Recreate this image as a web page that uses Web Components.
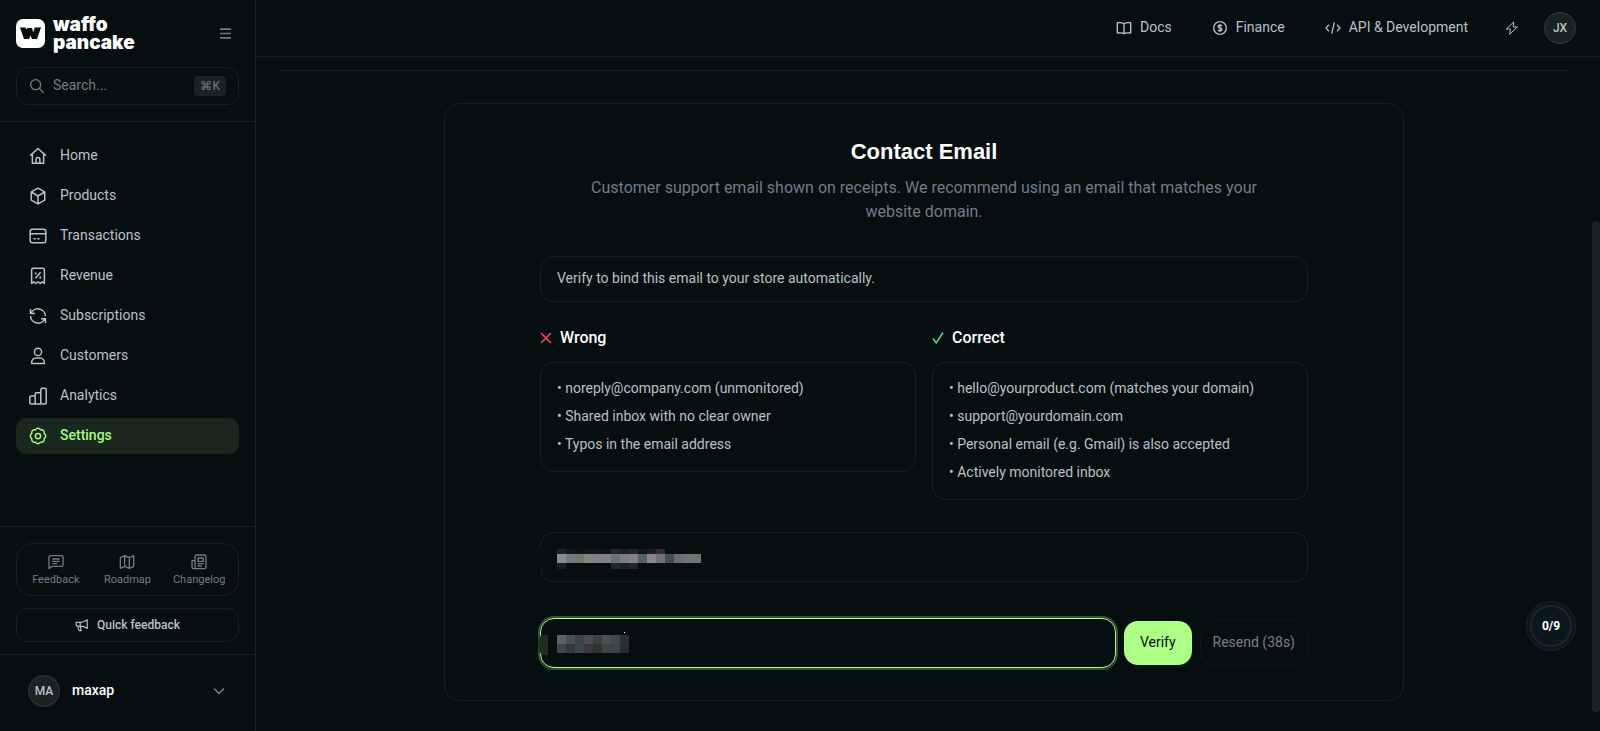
<!DOCTYPE html>
<html lang="en">
<head>
<meta charset="utf-8">
<title>Settings - Waffo Pancake</title>
<style>
    :root {
        --bg: #060e10;
        --line: #181f21;
        --text: #b9c1c9;
        --muted: #6e7e88;
        --raised: #1b2223;
        --accent: #adff85;
    }

    body {
        margin: 0;
        background: var(--bg);
        color: var(--text);
        font-family: Roboto, "Liberation Sans", sans-serif;
        font-size: 14px;
        line-height: 20px;
    }
</style>
</head>
<body>
<app-shell>
    <side-bar slot="sidebar">
        <nav-item icon="home">Home</nav-item>
        <nav-item icon="box">Products</nav-item>
        <nav-item icon="card">Transactions</nav-item>
        <nav-item icon="receipt">Revenue</nav-item>
        <nav-item icon="sync">Subscriptions</nav-item>
        <nav-item icon="user">Customers</nav-item>
        <nav-item icon="chart">Analytics</nav-item>
        <nav-item icon="gear" active>Settings</nav-item>
    </side-bar>
    <top-bar slot="header">
        <top-link icon="book">Docs</top-link>
        <top-link icon="dollar">Finance</top-link>
        <top-link icon="code">API &amp; Development</top-link>
    </top-bar>
    <contact-card>
        <tip-list icon="cross" label="Wrong">
            <li>noreply@company.com (unmonitored)</li>
            <li>Shared inbox with no clear owner</li>
            <li>Typos in the email address</li>
        </tip-list>
        <tip-list icon="check" label="Correct">
            <li>hello@yourproduct.com (matches your domain)</li>
            <li>support@yourdomain.com</li>
            <li>Personal email (e.g. Gmail) is also accepted</li>
            <li>Actively monitored inbox</li>
        </tip-list>
    </contact-card>
</app-shell>
<progress-badge>0/9</progress-badge>

<script>
const ICONS = {
    home: '<path d="M1.500 11.500 12 2l10.500 9.500M4.500 9.500v12h15v-12M9.500 21.500v-5a2.500 2.500 0 0 1 5 0v5"/>',
    box: '<path d="M12 1.500 21 6.500v11l-9 5-9-5v-11zM3 6.500l9 5.500 9-5.500M12 12v10.500"/>',
    card: '<rect x="1.500" y="3" width="21" height="18" rx="3"/><path d="M1.500 9h21M6 15.500h3M11 15.500h3"/>',
    receipt: '<path d="M3.500 22V4a2.500 2.500 0 0 1 2.500-2.500h12A2.500 2.500 0 0 1 20.500 4v18l-2.800-2.300L15 22l-3-2.300L9 22l-2.700-2.300zM8.500 15l7-8"/><path d="M7.800 8.500h2.400M13.800 14h2.400" stroke-width="2.500"/>',
    sync: '<path d="M2 2.500v6h6M22 21.500v-6h-6M2.800 8.500A10 10 0 0 1 22 12M21.200 15.500A10 10 0 0 1 2 12"/>',
    user: '<circle cx="12" cy="6.500" r="4.800"/><path d="M3.500 22v-1.500a6 6 0 0 1 6-6h5a6 6 0 0 1 6 6V22z"/>',
    chart: '<rect x="1" y="12" width="7.300" height="10.500" rx="2"/><path d="M8.300 12V9.500a2 2 0 0 1 2-2h5.400M8 22.500h8"/><rect x="15.700" y="1.500" width="7.300" height="21" rx="2"/>',
    gear: '<path d="M20.300 8.600a4 4 0 0 1 0 6.800 4 4 0 0 1-4.900 4.900 4 4 0 0 1-6.800 0 4 4 0 0 1-4.900-4.900 4 4 0 0 1 0-6.800 4 4 0 0 1 4.900-4.900 4 4 0 0 1 6.800 0 4 4 0 0 1 4.900 4.900z"/><circle cx="12" cy="12" r="3.500"/>',
    book: '<path d="M12 5.500v14M12 5.500C10 4 7 3.500 2 4v15.500c5-.5 8-.5 10 1 2-1.500 5-1.500 10-1V4C17 3.500 14 4 12 5.500z"/>',
    dollar: '<circle cx="12" cy="12" r="9.500"/><path d="M15 9.500c-.5-1.200-1.500-1.700-3-1.700s-3 .5-3 1.900 1.500 1.900 3 2.200 3 .8 3 2.200-1.500 2.100-3 2.100-2.600-.6-3-1.700M12 6v12"/>',
    code: '<path d="M6 7 1.500 12 6 17M18 7l4.500 5-4.500 5M14 3.500l-4 17"/>',
    bolt: '<path d="M14.500 3 3.500 13.500h6L8.500 21.500l11.500-11h-6z"/>',
    search: '<circle cx="10" cy="10" r="7.500"/><path d="m15.500 15.500 6.500 6.500"/>',
    menu: '<path d="M2 4h20M2 12h20M2 20h20"/>',
    message: '<path d="M1.500 22V5a2.500 2.500 0 0 1 2.500-2.500h16A2.500 2.500 0 0 1 22.500 5v11a2.500 2.500 0 0 1-2.500 2.500H6zM6.500 7.500h11M6.500 11h11M6.500 14.500h7"/>',
    map: '<path d="M2 5.500 8.500 2.500l7 3 6.500-3v16l-6.500 3-7-3L2 21.500zM8.500 2.500v16M15.500 5.500v16"/>',
    news: '<path d="M6 19.500V4a2.500 2.500 0 0 1 2.500-2.500h11.500A2.500 2.500 0 0 1 22.500 4v15.500a2.500 2.500 0 0 1-2.500 2.500H4A2.500 2.500 0 0 1 1.500 19.500V10H6M4.500 22A2 2 0 0 0 6 19.500M10.500 6h8v5h-8zM10 14.500h9M10 18h6"/>',
    horn: '<path d="M2 7.500h7c4 0 8-1.500 12-4.500v15c-4-3-8-4-12-4H4a2 2 0 0 1-2-2zM5 14c0 3 .5 5.500 2.500 7.500H11c-1.500-2-2-4.500-2-7.500V7.500"/>',
    chevron: '<path d="m2 7 10 10L22 7"/>',
    cross: '<path d="m2 2 20 20M22 2 2 22"/>',
    check: '<path d="m2 13 6.500 9L22 1"/>'
};

// Line icon; size follows --icon-size, weight follows the stroke attribute.
class UiIcon extends HTMLElement {
    connectedCallback() {
        if (!this.shadowRoot) this.attachShadow({ mode: 'open' });
        const width = this.getAttribute('stroke') || '1.5';
        this.shadowRoot.innerHTML = `
            <style>
                :host { display: block; flex: none; width: var(--icon-size, 16px); height: var(--icon-size, 16px); }
                svg { display: block; width: 100%; height: 100%; }
            </style>
            <svg viewBox="0 0 24 24" fill="none" stroke="currentColor" stroke-width="${width}"
                stroke-linejoin="round" aria-hidden="true">${ICONS[this.getAttribute('name')]}</svg>
        `;
    }
}

class AppShell extends HTMLElement {
    constructor() {
        super();
        this.attachShadow({ mode: 'open' }).innerHTML = `
            <style>
                :host { display: grid; grid-template-columns: 256px 1fr; height: 100vh; overflow: hidden; }
                .main { display: flex; flex-direction: column; min-width: 0; min-height: 0; }
                .body { display: flex; flex: 1; min-height: 0; }
                main { flex: 1; padding: 13px 24px 0; overflow: hidden; }
                hr { margin: 0 0 32px; border: 0; border-top: 1px solid var(--line); }
                .track { width: 8px; display: grid; grid-template-rows: 164fr 491fr 19fr; }
                .thumb { grid-row: 2; border-radius: 4px; background: var(--raised); }
            </style>
            <slot name="sidebar"></slot>
            <div class="main">
                <slot name="header"></slot>
                <div class="body">
                    <main><hr><slot></slot></main>
                    <div class="track"><div class="thumb"></div></div>
                </div>
            </div>
        `;
    }
}

class NavItem extends HTMLElement {
    connectedCallback() {
        if (!this.shadowRoot) this.attachShadow({ mode: 'open' });
        this.shadowRoot.innerHTML = `
            <style>
                :host { display: block; --icon-size: 18px; }
                a {
                    display: flex;
                    align-items: center;
                    gap: 13px;
                    height: 36px;
                    padding: 0 13px;
                    border-radius: 10px;
                    color: var(--text);
                    text-decoration: none;
                }
                span { padding-bottom: 2px; }
                :host([active]) a { background: #1a271f; color: #a3fb7c; font-weight: 500; }
            </style>
            <a href="#"><ui-icon name="${this.getAttribute('icon')}" stroke="2"></ui-icon><span><slot></slot></span></a>
        `;
    }
}

class SideBar extends HTMLElement {
    constructor() {
        super();
        this.attachShadow({ mode: 'open' }).innerHTML = `
            <style>
                :host { display: flex; flex-direction: column; border-right: 1px solid var(--line); box-sizing: border-box; }
                button { font: inherit; color: inherit; background: none; border: 0; padding: 0; }
                .top { padding: 16px; border-bottom: 1px solid var(--line); }
                .brand { display: flex; align-items: center; gap: 8px; height: 35px; margin-bottom: 16px; }
                .brand svg { width: 29px; height: 29px; }
                .name { flex: 1; color: #fff; font: 900 19px/18px Inter, sans-serif; }
                .menu { --icon-size: 13px; margin-right: 7px; color: var(--muted); }
                .search {
                    display: flex;
                    align-items: center;
                    gap: 8px;
                    height: 36px;
                    padding: 0 12px;
                    border: 1px solid var(--line);
                    border-radius: 12px;
                    color: var(--muted);
                }
                input {
                    flex: 1;
                    min-width: 0;
                    padding: 0 0 2px;
                    border: 0;
                    outline: 0;
                    background: none;
                    color: var(--text);
                    font: inherit;
                }
                input::placeholder { color: var(--muted); opacity: 1; }
                kbd { padding: 0 6px; border-radius: 4px; background: var(--raised); font: inherit; font-size: 12px; }
                nav { display: flex; flex: 1; flex-direction: column; gap: 4px; padding: 16px; }
                .help { display: grid; gap: 12px; padding: 16px 16px 12px; border: solid var(--line); border-width: 1px 0; }
                .links {
                    display: grid;
                    grid-template-columns: repeat(3, 1fr);
                    padding: 10px 3px 7px;
                    border: 1px solid var(--line);
                    border-radius: 16px;
                }
                .links a {
                    display: grid;
                    justify-items: center;
                    gap: 2px;
                    color: var(--muted);
                    font-size: 11px;
                    line-height: 16px;
                    text-decoration: none;
                }
                .quick {
                    display: flex;
                    align-items: center;
                    justify-content: center;
                    gap: 8px;
                    height: 34px;
                    border: 1px solid var(--line);
                    border-radius: 12px;
                    font-size: 12px;
                    font-weight: 500;
                    --icon-size: 14px;
                }
                .account { display: flex; align-items: center; gap: 12px; padding: 20px 30px 24px 28px; text-align: left; --icon-size: 12px; }
                .account b { flex: 1; padding-bottom: 2px; color: #fff; font-weight: 500; }
                .account ui-icon { color: var(--muted); }
            </style>
            <div class="top">
                <div class="brand">
                    <svg viewBox="0 0 29 29" aria-hidden="true">
                        <rect width="29" height="29" rx="7" fill="#fff"/>
                        <path d="M4 8.500h5.500l.8 2 1.200-1.500h4.500l1.200 4.500 1.600-5H25l-4 11.500h-5l-1.500-3.500-1.500 3.500H8z" fill="#060e10"/>
                    </svg>
                    <div class="name">waffo<br>pancake</div>
                    <button class="menu" aria-label="Collapse sidebar"><ui-icon name="menu" stroke="3"></ui-icon></button>
                </div>
                <label class="search">
                    <ui-icon name="search" stroke="2"></ui-icon>
                    <input type="search" placeholder="Search..." aria-label="Search">
                    <kbd>⌘K</kbd>
                </label>
            </div>
            <nav><slot></slot></nav>
            <div class="help">
                <div class="links">
                    <a href="#"><ui-icon name="message" stroke="2"></ui-icon>Feedback</a>
                    <a href="#"><ui-icon name="map" stroke="2"></ui-icon>Roadmap</a>
                    <a href="#"><ui-icon name="news" stroke="2"></ui-icon>Changelog</a>
                </div>
                <button class="quick"><ui-icon name="horn" stroke="2"></ui-icon>Quick feedback</button>
            </div>
            <button class="account"><user-avatar>MA</user-avatar><b>maxap</b><ui-icon name="chevron" stroke="3"></ui-icon></button>
        `;
    }
}

class UserAvatar extends HTMLElement {
    constructor() {
        super();
        this.attachShadow({ mode: 'open' }).innerHTML = `
            <style>
                :host {
                    display: grid;
                    place-items: center;
                    box-sizing: border-box;
                    width: 32px;
                    height: 32px;
                    border: 1px solid #343b3d;
                    border-radius: 50%;
                    background: var(--raised);
                    font-size: 12px;
                    font-weight: 500;
                }
            </style>
            <slot></slot>
        `;
    }
}

class TopLink extends HTMLElement {
    connectedCallback() {
        if (!this.shadowRoot) this.attachShadow({ mode: 'open' });
        this.shadowRoot.innerHTML = `
            <style>
                a { display: flex; align-items: center; gap: 8px; color: var(--text); text-decoration: none; }
                span { padding-bottom: 2px; }
            </style>
            <a href="#"><ui-icon name="${this.getAttribute('icon')}" stroke="2"></ui-icon><span><slot></slot></span></a>
        `;
    }
}

class TopBar extends HTMLElement {
    constructor() {
        super();
        this.attachShadow({ mode: 'open' }).innerHTML = `
            <style>
                :host { display: block; border-bottom: 1px solid var(--line); }
                header { display: flex; align-items: center; justify-content: flex-end; height: 56px; padding: 0 24px; }
                nav { display: flex; gap: 40px; }
                button { padding: 0; border: 0; background: none; color: inherit; font: inherit; }
                .bolt { margin: 0 24px 0 36px; }
            </style>
            <header>
                <nav><slot></slot></nav>
                <button class="bolt" aria-label="Shortcuts"><ui-icon name="bolt"></ui-icon></button>
                <button aria-label="Account"><user-avatar>JX</user-avatar></button>
            </header>
        `;
    }
}

class TipList extends HTMLElement {
    connectedCallback() {
        if (!this.shadowRoot) this.attachShadow({ mode: 'open' });
        this.shadowRoot.innerHTML = `
            <style>
                :host { display: block; --icon-size: 12px; }
                h3 {
                    display: flex;
                    align-items: center;
                    gap: 8px;
                    margin: 0 0 12px;
                    color: #fff;
                    font-size: 16px;
                    font-weight: 500;
                    line-height: 24px;
                }
                ui-icon[name=cross] { color: #f4504e; }
                ui-icon[name=check] { color: #4ade80; }
                ul {
                    display: grid;
                    gap: 8px;
                    margin: 0;
                    padding: 15px 16px 17px;
                    border: 1px solid var(--line);
                    border-radius: 14px;
                    list-style: none;
                }
                ::slotted(li)::before { content: "• "; }
            </style>
            <h3><ui-icon name="${this.getAttribute('icon')}" stroke="3"></ui-icon>${this.getAttribute('label')}</h3>
            <ul><slot></slot></ul>
        `;
    }
}

// Text field whose value is covered by a mosaic passed in through the slot.
class MaskedField extends HTMLElement {
    connectedCallback() {
        if (!this.shadowRoot) this.attachShadow({ mode: 'open' });
        this.shadowRoot.innerHTML = `
            <style>
                :host { display: block; position: relative; }
                input {
                    display: block;
                    box-sizing: border-box;
                    width: 100%;
                    height: 50px;
                    padding: 0 16px;
                    border: 1px solid var(--line);
                    border-radius: 14px;
                    outline: 0;
                    background: none;
                    color: var(--text);
                    font: inherit;
                }
                :host([active]) input { border-color: var(--accent); box-shadow: 0 0 0 2px #34532f; }
                ::slotted(svg) { position: absolute; left: -4px; top: 12px; pointer-events: none; }
            </style>
            <input type="text" aria-label="${this.getAttribute('label')}">
            <slot></slot>
        `;
    }
}

const row = (colors, y, h) => colors.split(' ').map((c, i) =>
    c === '-' ? '' : `<rect x="${21 + i * 9}" y="${y}" width="9" height="${h}" fill="#${c}"/>`).join('');

class ContactCard extends HTMLElement {
    constructor() {
        super();
        this.attachShadow({ mode: 'open' }).innerHTML = `
            <style>
                :host {
                    display: block;
                    box-sizing: border-box;
                    max-width: 960px;
                    margin: 0 auto;
                    padding: 32px;
                    border: 1px solid var(--line);
                    border-radius: 16px;
                }
                .content { max-width: 768px; margin: 0 auto; }
                h2 { margin: 0 0 8px; color: #fff; font: bold 22px/32px "Liberation Sans", sans-serif; text-align: center; }
                p { max-width: 672px; margin: 0 auto 32px; color: var(--muted); font-size: 16px; line-height: 24px; text-align: center; }
                .note { padding: 11px 16px 13px; border: 1px solid var(--line); border-radius: 14px; }
                .tips { display: grid; grid-template-columns: 1fr 1fr; align-items: start; gap: 16px; margin: 24px 0 32px; }
                form { display: flex; align-items: center; gap: 8px; margin-top: 36px; }
                form masked-field { flex: 1; }
                button { height: 44px; padding: 0 16px 2px; border: 0; border-radius: 14px; background: var(--accent); color: #060e10; font: inherit; }
                button:disabled { height: 46px; padding: 0 12px 2px; border: 1px solid #0e1618; background: none; color: #7b8080; }
            </style>
            <div class="content">
                <h2>Contact Email</h2>
                <p>Customer support email shown on receipts. We recommend using an email that matches your website domain.</p>
                <div class="note">Verify to bind this email to your store automatically.</div>
                <div class="tips"><slot></slot></div>
                <masked-field label="Contact email">
                    <svg width="170" height="26" aria-hidden="true">
                        <rect x="3" y="5" width="9" height="20" fill="#060e10"/>
                        ${row('1a2124 11181a 0d1416 11181a 11181a 0e1517 23292e 1a2123 20262a 12191c 1a2022 2b2f3a - - - -', 5, 5)}
                        ${row('7f8e99 727a7e 717871 84877a 7f8081 838384 69717d 7d8078 848187 566365 8b868d 756f7c 424d50 6a6e75 747376 6b776f', 10, 9)}
                        ${row('171e20 - - - - - 22292d 192022 20272a - - - - - - -', 19, 6)}
                    </svg>
                </masked-field>
                <form>
                    <masked-field label="Verification code" active>
                        <svg width="170" height="26" aria-hidden="true">
                            <path d="M12 5v20H6C1 21 1 9 5 5z" fill="#1d3020"/>
                            <rect x="88" y="2" width="1" height="1" fill="#fff"/>
                            ${row('5f6264 495153 3c4444 4b4d4f 3d4040 495152 3e494d 302f2f', 5, 9)}
                            ${row('3d4648 2e3942 3d4745 36373f 313333 3d4543 38444a 272e2f', 14, 9)}
                        </svg>
                    </masked-field>
                    <button type="button">Verify</button>
                    <button type="button" disabled>Resend (38s)</button>
                </form>
            </div>
        `;
    }
}

class ProgressBadge extends HTMLElement {
    constructor() {
        super();
        this.attachShadow({ mode: 'open' }).innerHTML = `
            <style>
                :host { position: fixed; right: 24px; bottom: 80px; }
                button {
                    display: grid;
                    width: 50px;
                    height: 50px;
                    padding: 3px;
                    border: 1px solid #17262b;
                    border-radius: 50%;
                    background: #0a181d;
                    color: #fff;
                    font: bold 12px/16px Roboto, sans-serif;
                }
                span { display: grid; place-items: center; border: 2px solid #1b292e; border-radius: 50%; }
            </style>
            <button aria-label="Setup progress"><span><slot></slot></span></button>
        `;
    }
}

customElements.define('ui-icon', UiIcon);
customElements.define('user-avatar', UserAvatar);
customElements.define('nav-item', NavItem);
customElements.define('side-bar', SideBar);
customElements.define('top-link', TopLink);
customElements.define('top-bar', TopBar);
customElements.define('tip-list', TipList);
customElements.define('masked-field', MaskedField);
customElements.define('contact-card', ContactCard);
customElements.define('progress-badge', ProgressBadge);
customElements.define('app-shell', AppShell);
</script>
</body>
</html>
